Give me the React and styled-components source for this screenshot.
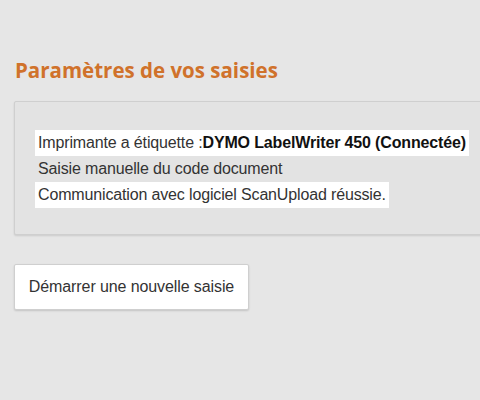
import styled, { createGlobalStyle } from 'styled-components'

const Global = createGlobalStyle`
  html, body {
    margin: 0;
    padding: 0;
    background: #e6e6e6;
    overflow: hidden;
  }
`

const lines = [
  { label: 'Imprimante a étiquette :', strong: 'DYMO LabelWriter 450 (Connectée)', lit: true },
  { label: 'Saisie manuelle du code document', lit: false },
  { label: 'Communication avec logiciel ScanUpload réussie.', lit: true },
]

const App = () => {
  return (
    <Page>
      <Global />
      <Title>Paramètres de vos saisies</Title>
      <Panel>
        {lines.map((l, i) => (
          <Line key={i} $lit={l.lit}>
            {l.label}
            {l.strong && <b>{l.strong}</b>}
          </Line>
        ))}
      </Panel>
      <Button>Démarrer une nouvelle saisie</Button>
    </Page>
  )
}

const Page = styled.div`
  width: 480px;
  height: 400px;
  padding: 55px 0 0 14px;
  box-sizing: border-box;
  display: flex;
  flex-direction: column;
  align-items: flex-start;
  overflow: hidden;
`

const Title = styled.h2`
  margin: 0 0 0 1px;
  font-family: 'Open Sans', sans-serif;
  font-weight: 700;
  font-size: 20.5px;
  line-height: 30px;
  color: #d0722b;
`

const Panel = styled.div`
  margin-top: 16px;
  width: 500px;
  height: 134px;
  box-sizing: border-box;
  padding: 28px 20px 0 20px;
  background: #e3e3e3;
  border: 1px solid #cfcfcf;
  border-radius: 2px;
  box-shadow: 0 1px 2px rgba(0, 0, 0, 0.12);
  display: flex;
  flex-direction: column;
  align-items: flex-start;
`

const Line = styled.div`
  font-family: 'Liberation Sans', Arial, sans-serif;
  font-size: 16px;
  letter-spacing: -0.15px;
  line-height: 26px;
  color: #333;
  padding: 0 3px;
  background: ${p => (p.$lit ? '#fff' : 'transparent')};
  b {
    color: #111;
  }
`

const Button = styled.button`
  margin-top: 29px;
  width: 235px;
  height: 46px;
  background: #fff;
  border: 1px solid #cfcfcf;
  border-radius: 2px;
  box-shadow: 0 1px 2px rgba(0, 0, 0, 0.15);
  font-family: 'Liberation Sans', Arial, sans-serif;
  font-size: 16px;
  letter-spacing: -0.1px;
  color: #333;
  cursor: pointer;
`

export default App
